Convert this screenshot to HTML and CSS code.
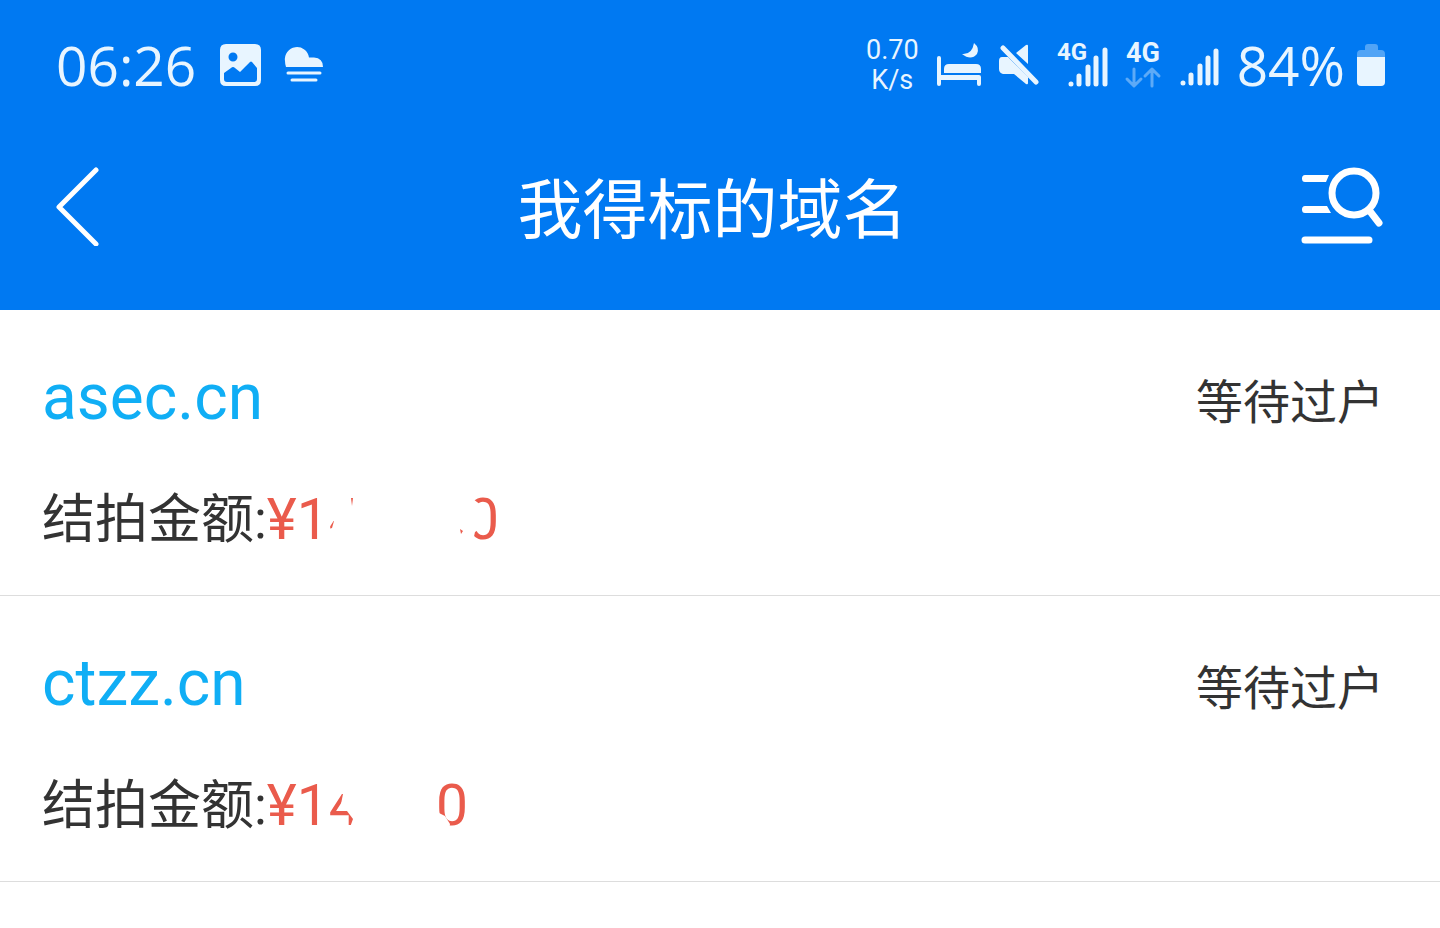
FILE: index.html
```
<!DOCTYPE html>
<html lang="zh-CN">
<head>
  <meta charset="UTF-8">
  <meta name="viewport" content="width=device-width, initial-scale=1.0">
  <title>我得标的域名</title>
  <link rel="stylesheet" href="styles.css">
</head>
<body>
  <header class="header">
    <div class="status-bar">
      <div class="status-left">
        <span class="status-text">06:26</span>
        <svg class="icon" width="41" height="42" viewBox="0 0 41 42">
          <path fill-rule="evenodd" d="M6 0H35Q41 0 41 6V36Q41 42 35 42H6Q0 42 0 36V6Q0 0 6 0ZM13 8.500A4.500 4.500 0 1 0 13 17.500A4.500 4.500 0 1 0 13 8.500ZM4 29V35Q4 38 7 38H34Q37 38 37 35V24L32 18Q31 17 30 18L20 28L15 24Q13 22 11 24Z"/>
        </svg>
        <svg class="icon" width="39" height="36" viewBox="0 0 39 36">
          <path d="M1 20Q0 17 0 14A12 12 0 0 1 24 10.500H29Q38 11 38 20Z"/>
          <path class="line" stroke-width="3" d="M3 26H35M7 33H31"/>
        </svg>
      </div>
      <div class="status-right">
        <span class="speed">0.70<br>K/s</span>
        <svg class="icon" width="44" height="44" viewBox="0 0 44 44">
          <path d="M0 15Q0 13 2 13Q4 13 4 15V32H42Q44 32 44 34V41Q44 43 42 43Q40 43 40 41V37H4V41Q4 43 2 43Q0 43 0 41ZM7 30V26Q7 21 12 21H39Q44 21 44 26V30ZM37 0Q43 5 40 11Q34 18 25 11Q35 12 37 0Z"/>
        </svg>
        <svg class="icon" width="40" height="42" viewBox="0 0 40 42">
          <path d="M17 9L27 1Q29 0 29 2V20ZM3 13H9L29 33V39Q29 41 27 40L15 30H4Q0 29 0 25V17Q0 13 3 13Z"/>
          <path class="line" stroke-width="5" d="M4 4L37 38"/>
        </svg>
        <svg class="icon" width="51" height="46" viewBox="0 0 51 46">
          <text class="network-label" x="0" y="18">4G</text>
          <path class="line" stroke-width="5" d="M14 42V42M22 34V42M31 25V42M39 16V42M48 8V42"/>
        </svg>
        <svg class="icon" width="36" height="48" viewBox="0 0 36 48">
          <text class="network-label large" x="0" y="21">4G</text>
          <path class="line faint" stroke-width="3" d="M8 28V44M1 38L8 45L15 38M26 45V28M19 35L26 28L33 35"/>
        </svg>
        <svg class="icon" width="39" height="42" viewBox="0 0 39 42">
          <path class="line" stroke-width="5" d="M3 39V39M11 31V39M20 22V39M28 14V39M36 7V39"/>
        </svg>
        <span class="battery">
          <span class="status-text">84%</span>
          <svg class="icon" width="28" height="42" viewBox="0 0 28 42">
            <path opacity=".35" d="M8 6V3Q8 0 11 0H18Q21 0 21 3V6H24Q28 6 28 10V13H0V10Q0 6 4 6Z"/>
            <path d="M0 13H28V38Q28 42 24 42H4Q0 42 0 38Z"/>
          </svg>
        </span>
      </div>
    </div>
    <nav class="nav-bar">
      <button class="nav-button back" type="button" aria-label="返回">
        <svg width="44" height="80" viewBox="0 0 44 80">
          <path class="line" stroke-width="5" d="M40 4L3 41L40 78"/>
        </svg>
      </button>
      <h1>我得标的域名</h1>
      <button class="nav-button" type="button" aria-label="筛选">
        <svg width="84" height="80" viewBox="0 0 84 80">
          <g class="line" stroke-width="7">
            <circle cx="53" cy="27" r="22"/>
            <path d="M68 44L78 57M4 74H68"/>
          </g>
          <path class="solid" d="M4 9H28L25 16H4Q1 16 1 12.500Q1 9 4 9ZM4 40H26L30 47H4Q1 47 1 43.500Q1 40 4 40Z"/>
        </svg>
      </button>
    </nav>
  </header>

  <main class="list">
    <section class="item">
      <div class="row">
        <a class="domain" href="#">asec.cn</a>
        <span class="state">等待过户</span>
      </div>
      <div class="row amount">
        <span>结拍金额:</span>
        <span class="price wide">
          <span>¥14</span><span>0</span>
          <!-- Hidden digits -->
          <svg class="eraser" width="234" height="80" viewBox="0 0 234 80">
            <path class="blank" d="M56 10H206V19L214 25L218 34L215 48L208 52L204 70H58V50L65 48L67 41L60 42Z"/>
            <path class="mark" d="M84 18L86 18L85 26ZM193 49L196 51L194 54Z"/>
          </svg>
        </span>
      </div>
    </section>

    <section class="item">
      <div class="row">
        <a class="domain" href="#">ctzz.cn</a>
        <span class="state">等待过户</span>
      </div>
      <div class="row amount">
        <span>结拍金额:</span>
        <span class="price">
          <span>¥14</span><span>0</span>
          <!-- Hidden digits -->
          <svg class="eraser" width="234" height="80" viewBox="0 0 234 80">
            <path class="blank" d="M58 10H170L175 20L170 34L170 46L178 50L183 58L182 64H82L86 53L80 45L74 38L76 28L62 28Z"/>
          </svg>
        </span>
      </div>
    </section>
  </main>
</body>
</html>
```
FILE: styles.css
```
* {
  box-sizing: border-box;
}
body {
  margin: 0;
  background: #fff;
  color: #333;
  font-family: Roboto, "Noto Sans CJK SC", sans-serif;
}
.header {
  padding: 0 55px 28px 56px;
  background: #0079f2;
  color: #fff;
}
.status-bar {
  display: flex;
  align-items: center;
  justify-content: space-between;
  height: 130px;
  color: #e8f5ff;
  font-family: "Open Sans", sans-serif;
}
.status-left {
  display: flex;
  align-items: center;
  gap: 24px;
}
.status-right {
  display: flex;
  align-items: center;
  gap: 18px;
}
.status-text {
  font-size: 55px;
  line-height: 60px;
}
.speed {
  font-family: Roboto, sans-serif;
  font-size: 27px;
  line-height: 30px;
  text-align: center;
}
.battery {
  display: flex;
  align-items: center;
  gap: 12px;
}
.icon {
  flex: none;
  fill: currentColor;
  overflow: visible;
}
.line {
  fill: none;
  stroke: currentColor;
  stroke-linecap: round;
  stroke-linejoin: round;
}
.faint {
  opacity: .4;
}
.solid {
  fill: currentColor;
}
.network-label {
  font-family: Roboto, sans-serif;
  font-size: 24px;
  font-weight: bold;
}
.network-label.large {
  font-size: 27px;
}
.nav-bar {
  display: flex;
  align-items: center;
  justify-content: space-between;
  height: 152px;
}
.nav-bar h1 {
  margin: 0;
  padding-top: 10px;
  font-size: 65px;
  font-weight: normal;
  line-height: 80px;
}
.nav-button {
  display: flex;
  width: 84px;
  padding: 0;
  border: 0;
  background: none;
  color: inherit;
}
.nav-button.back {
  width: 68px;
}
.item {
  display: flex;
  flex-direction: column;
  gap: 42px;
  padding: 48px 56px 35px 42px;
  border-bottom: 1px solid #ddd;
}
.row {
  display: flex;
  align-items: baseline;
  justify-content: space-between;
  line-height: 80px;
}
.domain {
  color: #10aef5;
  font-size: 64px;
  text-decoration: none;
}
.state {
  font-size: 47px;
  line-height: 60px;
}
.amount {
  align-items: center;
  justify-content: flex-start;
  font-size: 53px;
}
.price {
  position: relative;
  display: flex;
  gap: 75px;
  color: #ea5b4c;
  font-size: 57px;
}
.price.wide {
  gap: 106px;
}
.eraser {
  position: absolute;
  top: 0;
  left: 0;
}
.blank {
  fill: #fff;
}
.mark {
  fill: currentColor;
}
```
